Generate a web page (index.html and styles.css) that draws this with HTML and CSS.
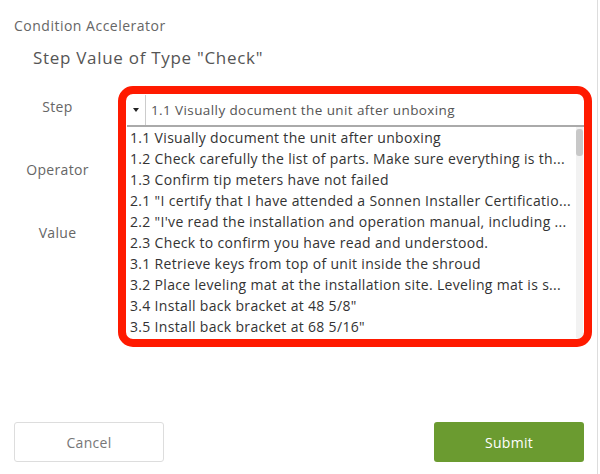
FILE: index.html
```html
<!DOCTYPE html>
<html lang="en">

<head>
  <meta charset="UTF-8">
  <meta name="viewport" content="width=device-width, initial-scale=1.0">
  <title>Condition Accelerator</title>
  <link rel="stylesheet" href="styles.css">
</head>

<body>
  <div class="dialog">
    <div class="app-title">Condition Accelerator</div>
    <h2 class="heading">Step Value of Type "Check"</h2>

    <div class="form">
      <div class="form-row">
        <label class="form-label">Step</label>
        <div class="step-field">
          <div class="select">
            <span class="select-arrow"></span>
            <span class="select-value">1.1 Visually document the unit after unboxing</span>
          </div>
          <div class="listbox">
            <ul class="options">
              <li>1.1 Visually document the unit after unboxing</li>
              <li>1.2 Check carefully the list of parts. Make sure everything is th...</li>
              <li>1.3 Confirm tip meters have not failed</li>
              <li>2.1 "I certify that I have attended a Sonnen Installer Certificatio...</li>
              <li>2.2 "I've read the installation and operation manual, including ...</li>
              <li>2.3 Check to confirm you have read and understood.</li>
              <li>3.1 Retrieve keys from top of unit inside the shroud</li>
              <li>3.2 Place leveling mat at the installation site. Leveling mat is s...</li>
              <li>3.4 Install back bracket at 48 5/8"</li>
              <li>3.5 Install back bracket at 68 5/16"</li>
            </ul>
            <div class="scrollbar"><div class="scroll-thumb"></div></div>
          </div>
          <div class="highlight"></div>
        </div>
      </div>
      <div class="form-row">
        <label class="form-label">Operator</label>
      </div>
      <div class="form-row">
        <label class="form-label">Value</label>
      </div>
    </div>

    <div class="actions">
      <button class="btn btn-cancel">Cancel</button>
      <button class="btn btn-submit">Submit</button>
    </div>
  </div>
</body>
</html>
```

FILE: styles.css
```css
body {
  font-family: 'Open Sans', 'Lato', sans-serif;
  margin: 0;
  padding: 0;
  background-color: #ffffff;
  color: #555555;
}

.dialog {
  width: 598px;
  height: 474px;
  box-sizing: border-box;
  border-right: 1px solid #dddddd;
  display: flex;
  flex-direction: column;
}

.app-title {
  font-size: 14px;
  line-height: 18px;
  letter-spacing: 0.5px;
  color: #666666;
  margin: 17px 0 0 14px;
}

.heading {
  font-size: 17px;
  font-weight: normal;
  line-height: 22px;
  letter-spacing: 0.7px;
  color: #555555;
  margin: 12px 0 0 33px;
}

.form {
  margin-top: 6px;
}

.form-row {
  height: 63px;
  display: flex;
  align-items: center;
}

.form-label {
  width: 127px;
  padding-right: 12px;
  box-sizing: border-box;
  text-align: center;
  font-size: 14px;
  letter-spacing: 0.3px;
  color: #666666;
}

.step-field {
  position: relative;
  width: 457px;
  margin-top: 9px;
}

.select {
  height: 32px;
  display: flex;
  align-items: center;
  border-bottom: 2px solid #aaaaaa;
  box-sizing: border-box;
  background: #ffffff;
}

.select-arrow {
  width: 18px;
  height: 100%;
  border-right: 1px solid #cccccc;
  display: flex;
  align-items: center;
  justify-content: center;
}

.select-arrow::after {
  content: "";
  border-left: 3px solid transparent;
  border-right: 3px solid transparent;
  border-top: 4px solid #222222;
}

.select-value {
  padding-left: 5px;
  font-size: 13.5px;
  letter-spacing: 0.4px;
  color: #555555;
  white-space: nowrap;
}

.listbox {
  position: absolute;
  top: 32px;
  left: 0;
  width: 456px;
  height: 211px;
  display: flex;
  background: #ffffff;
  z-index: 2;
}

.options {
  list-style: none;
  margin: 0;
  padding: 0 0 0 3px;
  flex: 1;
  overflow: hidden;
}

.options li {
  height: 21px;
  line-height: 21px;
  font-size: 14px;
  letter-spacing: 0.32px;
  color: #333333;
  white-space: nowrap;
}

.scrollbar {
  width: 7px;
  background: #f2f2f2;
  padding-top: 2px;
}

.scroll-thumb {
  height: 27px;
  background: #c8c8c8;
  border-radius: 3px;
}

.highlight {
  position: absolute;
  top: -9px;
  left: -9px;
  width: 474px;
  height: 261px;
  border: 8px solid #ff1a00;
  border-radius: 15px;
  box-sizing: border-box;
  z-index: 3;
  pointer-events: none;
}

.actions {
  margin-top: auto;
  margin-bottom: 12px;
  padding: 0 13px 0 14px;
  display: flex;
  justify-content: space-between;
}

.btn {
  width: 150px;
  height: 40px;
  font-family: 'Open Sans', 'Lato', sans-serif;
  font-size: 14px;
  letter-spacing: 0.3px;
  border-radius: 3px;
  cursor: pointer;
}

.btn-cancel {
  background: #ffffff;
  border: 1px solid #dddddd;
  color: #777777;
}

.btn-submit {
  background: #6b9b30;
  border: none;
  color: #ffffff;
}
```
